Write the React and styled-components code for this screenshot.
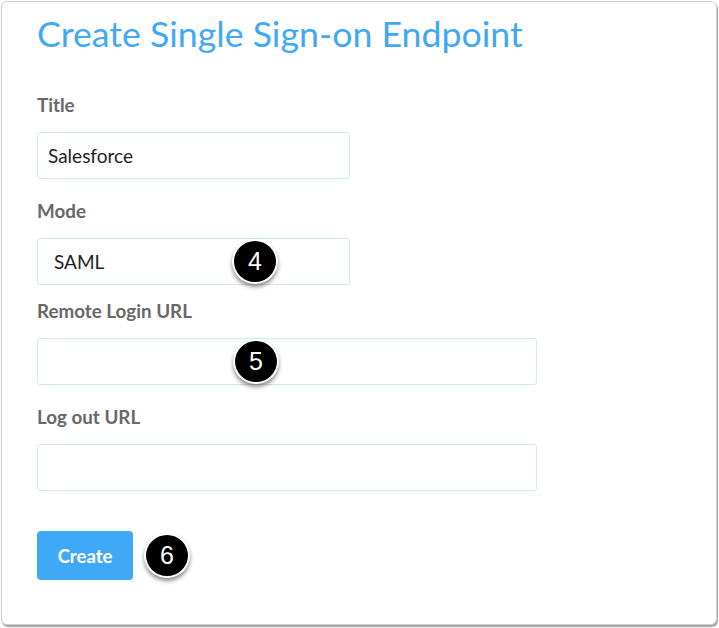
import React from "react";
import styled, { createGlobalStyle } from "styled-components";

const Global = createGlobalStyle`
  html, body { margin: 0; padding: 0; background: #fdfdfd; }
  body { font-family: "Lato", "Open Sans", sans-serif; }
  * { box-sizing: border-box; }
`;

const Page = styled.div`
  width: 719px;
  height: 628px;
  padding: 1px 2px 3px 1px;
`;

const Card = styled.div`
  height: 624px;
  width: 716px;
  background: #fff;
  border: 1px solid #cfcfcf;
  border-radius: 6px;
  box-shadow: 1px 2px 1px rgba(0, 0, 0, 0.35);
  padding: 10px 0 0 35px;
  display: flex;
  flex-direction: column;
`;

const Heading = styled.h1`
  margin: 0;
  font-family: "Lato", sans-serif;
  font-weight: 400;
  font-size: 35.7px;
  line-height: 44px;
  color: #3fa9f5;
`;

const Field = styled.div`
  display: flex;
  flex-direction: column;
  margin-top: ${(p) => p.$mt}px;
`;

const Label = styled.label`
  font-family: "Lato", sans-serif;
  font-weight: 700;
  font-size: 18.8px;
  line-height: 24px;
  color: #686868;
  margin-bottom: 15px;
`;

const InputWrap = styled.div`
  position: relative;
  width: ${(p) => p.$w}px;
  height: 47px;
`;

const Input = styled.div`
  width: 100%;
  height: 100%;
  border: 1px solid #cfe7fb;
  border-radius: 3px;
  background: #fff;
  display: flex;
  align-items: center;
  padding-left: ${(p) => p.$pl || 10}px;
  font-family: "Lato", sans-serif;
  font-size: 19px;
  color: #1e1e1e;
`;

const Badge = styled.div`
  position: absolute;
  left: ${(p) => p.$x}px;
  top: ${(p) => p.$y}px;
  width: 46px;
  height: 45px;
  border-radius: 50%;
  background: #000;
  border: 2px solid #fff;
  box-shadow: 0 3px 4px rgba(0, 0, 0, 0.45);
  display: flex;
  align-items: center;
  justify-content: center;
  color: #fff;
  font-family: "Liberation Sans", Arial, sans-serif;
  font-size: 25px;
  z-index: 2;
`;

const Actions = styled.div`
  position: relative;
  margin-top: 40px;
  display: flex;
  align-items: center;
`;

const Button = styled.button`
  width: 96px;
  height: 49px;
  border: none;
  border-radius: 4px;
  background: #40a9f7;
  color: #fff;
  font-family: "Lato", sans-serif;
  font-weight: 700;
  font-size: 18.5px;
  padding: 0;
`;

export default function App() {
  return (
    <>
      <Global />
      <Page>
        <Card>
          <Heading>Create Single Sign-on Endpoint</Heading>
          <Field $mt={37}>
            <Label>Title</Label>
            <InputWrap $w={313}>
              <Input>Salesforce</Input>
            </InputWrap>
          </Field>
          <Field $mt={20}>
            <Label>Mode</Label>
            <InputWrap $w={313}>
              <Input $pl={16}>SAML</Input>
              <Badge $x={195} $y={1}>4</Badge>
            </InputWrap>
          </Field>
          <Field $mt={14}>
            <Label>Remote Login URL</Label>
            <InputWrap $w={500}>
              <Badge $x={196} $y={1}>5</Badge>
              <Input />
            </InputWrap>
          </Field>
          <Field $mt={20}>
            <Label>Log out URL</Label>
            <InputWrap $w={500}>
              <Input />
            </InputWrap>
          </Field>
          <Actions>
            <Button>Create</Button>
            <Badge $x={107} $y={2}>6</Badge>
          </Actions>
        </Card>
      </Page>
    </>
  );
}
